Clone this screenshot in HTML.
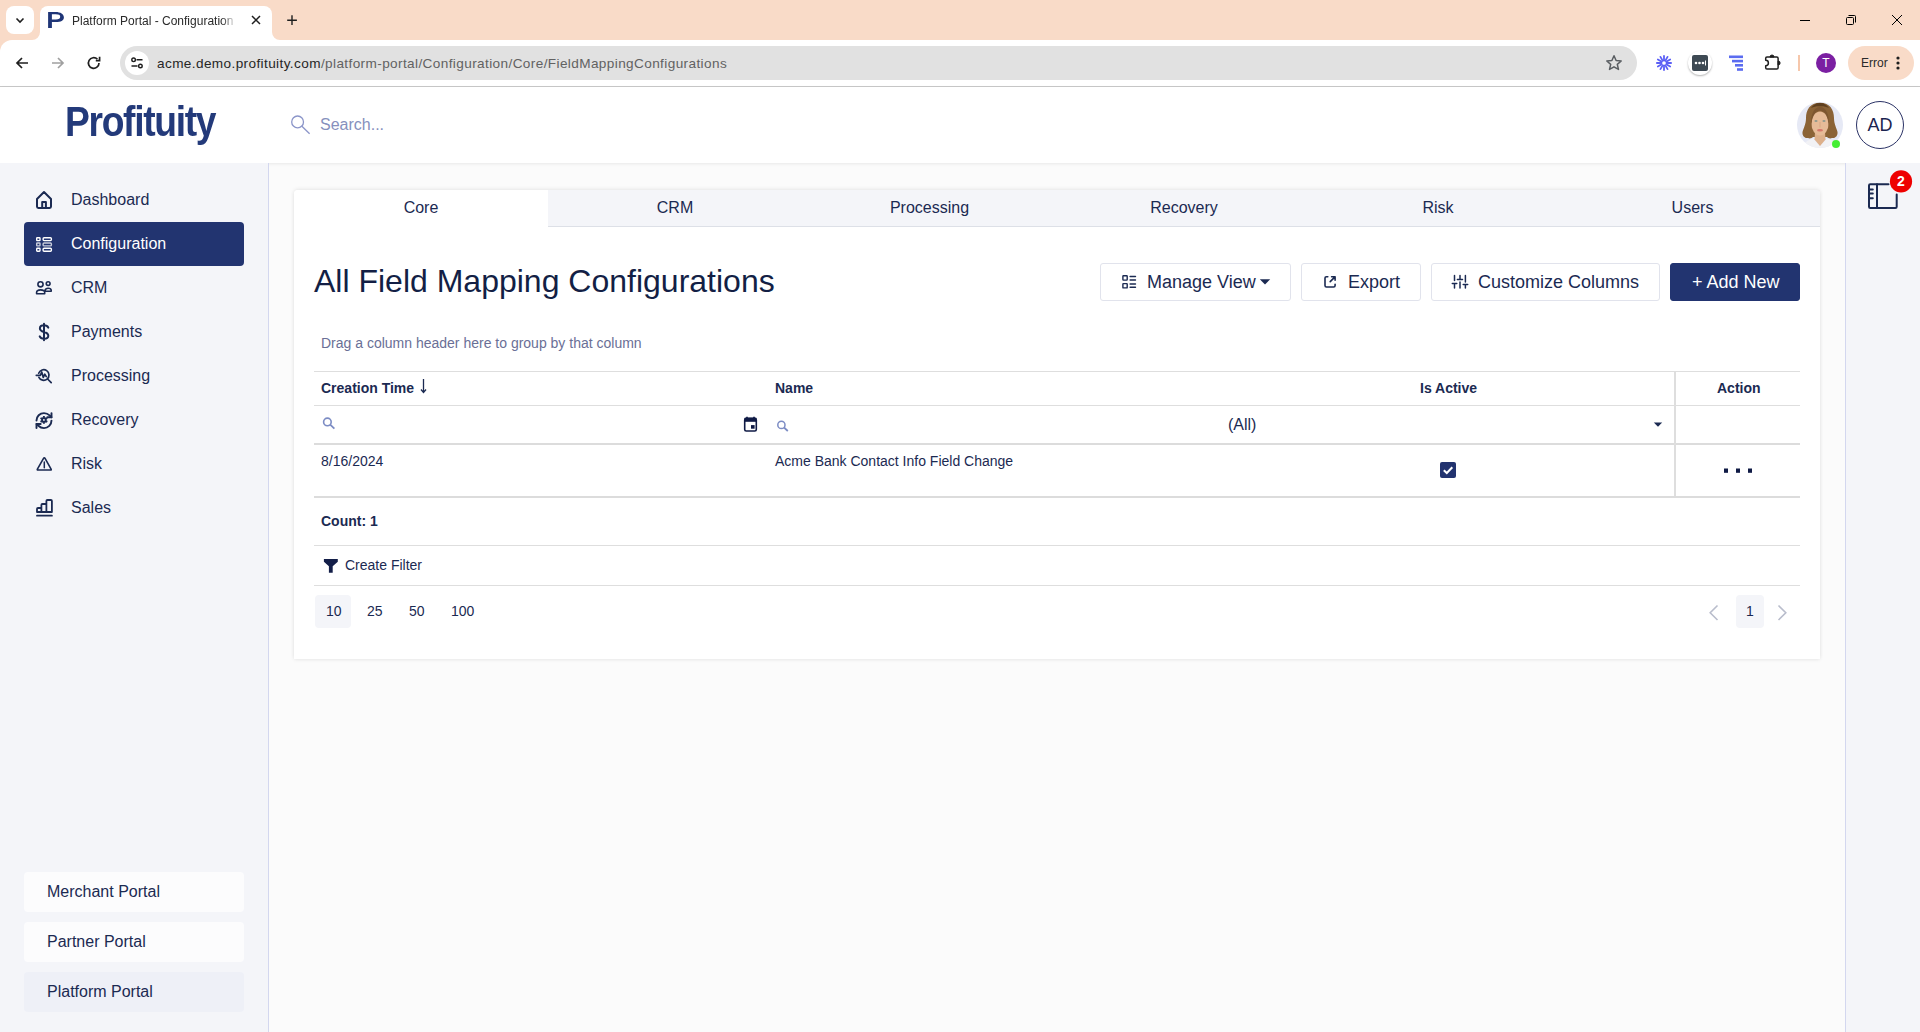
<!DOCTYPE html>
<html><head><meta charset="utf-8">
<style>
*{box-sizing:border-box;margin:0;padding:0}
html,body{width:1920px;height:1032px;overflow:hidden;background:#fbfbfb;font-family:"Liberation Sans",sans-serif}
.a{position:absolute}
svg{position:absolute;overflow:visible}
#tabstrip{left:0;top:0;width:1920px;height:40px;background:#f9dbc8}
#toolbar{left:0;top:40px;width:1920px;height:46px;background:#fff}
#tbline{left:0;top:86px;width:1920px;height:1px;background:#c9c9c9}
#omni{left:120px;top:46px;width:1517px;height:34px;border-radius:17px;background:#e1e1e1}
#hdr{left:0;top:87px;width:1920px;height:76px;background:#fff;box-shadow:0 1px 3px rgba(0,0,0,.08)}
#side{left:0;top:163px;width:269px;height:869px;background:#f4f5f9;border-right:1px solid #d3d7ef}
#rail{left:1845px;top:163px;width:75px;height:869px;background:#f4f5f9;border-left:1px solid #d3d7ef}
.nav{position:absolute;left:24px;width:220px;height:44px;border-radius:4px;color:#1b2a52;font-size:16px}
.nav span{position:absolute;left:47px;top:13px;line-height:18px}
.nav.act{background:#223470;color:#fff}
.portal{position:absolute;left:24px;width:220px;height:40px;border-radius:4px;background:#fcfcfd;color:#1b2a52;font-size:16px}
.portal span{position:absolute;left:23px;top:11px;line-height:18px}
#card{left:294px;top:190px;width:1526px;height:469px;background:#fff;border-radius:4px 4px 0 0;box-shadow:0 -1px 4px rgba(0,0,0,.07),0 1px 4px rgba(0,0,0,.06)}
.tab{position:absolute;top:0;height:37px;background:#f4f5f9;color:#1b2a52;font-size:16px;text-align:center;line-height:36px;border-bottom:1px solid #dde0e7}
.tab.act{background:#fff;border-bottom:none;border-radius:4px 4px 0 0}
.btn{position:absolute;top:73px;height:38px;border:1px solid #e1e3ec;border-radius:3px;background:#fff;color:#1b2a52;font-size:18px}
.btn span{position:absolute;top:8px;line-height:20px}
.ic{fill:none;stroke:#1b2a52;stroke-width:2;stroke-linecap:round;stroke-linejoin:round}
.hl{position:absolute;height:1px;background:#dedede}
.vl{position:absolute;width:2px;background:#dedede}
.th{position:absolute;top:380px;font-size:14px;font-weight:bold;color:#1b2a52;line-height:16px}
.td{position:absolute;font-size:14px;color:#1b2a52;line-height:16px}
.pg{position:absolute;top:603px;font-size:14px;color:#1b2a52;line-height:16px}
</style></head><body>
<!-- ============ browser chrome ============ -->
<div id="tabstrip" class="a"></div>
<div class="a" style="left:6px;top:6px;width:28px;height:28px;border-radius:8px;background:#fff"></div>
<svg style="left:12px;top:12px" width="16" height="16"><path d="M4.5 6.5 L8 10 L11.5 6.5" fill="none" stroke="#1f1f1f" stroke-width="1.6"/></svg>
<!-- active tab -->
<div class="a" style="left:40px;top:6px;width:232px;height:40px;background:#fff;border-radius:8px 8px 0 0"></div>
<svg style="left:32px;top:32px" width="8" height="8"><path d="M0 8 A8 8 0 0 0 8 0 V8 Z" fill="#fff"/></svg>
<svg style="left:272px;top:32px" width="8" height="8"><path d="M0 0 A8 8 0 0 0 8 8 H0 Z" fill="#fff"/></svg>
<svg style="left:44px;top:8px" width="24" height="24"><path fill-rule="evenodd" fill="#1f3577" d="M4.1 4 H11.6 C16.6 4 19.9 6.2 19.9 9.4 C19.9 12.5 16.8 14 12 14 H7.9 V19.9 H4.1 Z M7.9 6.3 V11.4 H11.8 C14.9 11.4 16.2 10.7 16.2 8.85 C16.2 7 14.8 6.3 11.8 6.3 Z"/></svg>
<div class="a" style="left:72px;top:13px;width:170px;height:16px;overflow:hidden;white-space:nowrap;font-size:12px;color:#2a2a2a;line-height:16px;-webkit-mask-image:linear-gradient(90deg,#000 88%,transparent 97%)">Platform Portal - Configuration</div>
<svg style="left:248px;top:12px" width="16" height="16"><path d="M4 4 L12 12 M12 4 L4 12" stroke="#1f1f1f" stroke-width="1.5"/></svg>
<svg style="left:284px;top:12px" width="16" height="16"><path d="M8 3.3 V13 M3.2 8.2 H12.9" stroke="#1f1f1f" stroke-width="1.4"/></svg>
<!-- window controls -->
<svg style="left:1797px;top:12px" width="16" height="16"><path d="M3 8.5 H13" stroke="#000" stroke-width="1"/></svg>
<svg style="left:1843px;top:12px" width="16" height="16"><rect x="3.5" y="5.5" width="7" height="7" rx="1" fill="none" stroke="#000" stroke-width="1"/><path d="M5.5 3.5 H11.5 Q12.5 3.5 12.5 4.5 V10.5" fill="none" stroke="#000" stroke-width="1"/></svg>
<svg style="left:1889px;top:12px" width="16" height="16"><path d="M3 3 L13 13 M13 3 L3 13" stroke="#000" stroke-width="1"/></svg>

<div id="toolbar" class="a"></div>
<div class="a" style="left:0;top:40px;width:12px;height:12px;background:#f9dbc8"></div>
<div class="a" style="left:0;top:40px;width:24px;height:24px;border-radius:12px 0 0 0;background:#fff"></div>
<!-- nav buttons -->
<svg style="left:14px;top:55px" width="16" height="16"><path d="M14 8 H3 M8 3 L3 8 L8 13" fill="none" stroke="#1f1f1f" stroke-width="1.7"/></svg>
<svg style="left:50px;top:55px" width="16" height="16"><path d="M2 8 H13 M8 3 L13 8 L8 13" fill="none" stroke="#a0a0a0" stroke-width="1.7"/></svg>
<svg style="left:86px;top:55px" width="16" height="16"><path d="M13 8 A5.3 5.3 0 1 1 11.4 4.2" fill="none" stroke="#1f1f1f" stroke-width="1.7"/><path d="M13.6 1.8 V5.6 H9.8" fill="none" stroke="#1f1f1f" stroke-width="1.7"/></svg>
<div id="omni" class="a"></div>
<div class="a" style="left:125px;top:51px;width:24px;height:24px;border-radius:12px;background:#fff"></div>
<svg style="left:129px;top:55px" width="16" height="16"><circle cx="4.6" cy="4.8" r="1.8" fill="none" stroke="#1f1f1f" stroke-width="1.4"/><path d="M7.5 4.8 H13.5 M2.5 11 H8.5" stroke="#1f1f1f" stroke-width="1.4"/><circle cx="11.4" cy="11" r="1.8" fill="none" stroke="#1f1f1f" stroke-width="1.4"/></svg>
<div class="a" style="left:157px;top:55px;font-size:13.6px;letter-spacing:0.385px;color:#626262;line-height:18px;white-space:nowrap"><span style="color:#262626">acme.demo.profituity.com</span>/platform-portal/Configuration/Core/FieldMappingConfigurations</div>
<svg style="left:1605px;top:54px" width="18" height="18"><path d="M9 1.8 L11.1 6.5 L16.2 7 L12.3 10.4 L13.5 15.4 L9 12.8 L4.5 15.4 L5.7 10.4 L1.8 7 L6.9 6.5 Z" fill="none" stroke="#5a5e62" stroke-width="1.5" stroke-linejoin="round"/></svg>
<!-- extensions -->
<svg style="left:1656px;top:55px" width="16" height="16"><path d="M11.60 8.00 L15.10 8.00 M11.12 9.80 L14.15 11.55 M9.80 11.12 L11.55 14.15 M8.00 11.60 L8.00 15.10 M6.20 11.12 L4.45 14.15 M4.88 9.80 L1.85 11.55 M4.40 8.00 L0.90 8.00 M4.88 6.20 L1.85 4.45 M6.20 4.88 L4.45 1.85 M8.00 4.40 L8.00 0.90 M9.80 4.88 L11.55 1.85 M11.12 6.20 L14.15 4.45 " stroke="#5b5ff5" stroke-width="1.8" stroke-linecap="round"/><circle cx="8" cy="8" r="2.5" fill="none" stroke="#5b5ff5" stroke-width="1.3"/></svg>
<div class="a" style="left:1688px;top:51px;width:24px;height:24px;border-radius:12px;background:#fff;box-shadow:0 1px 2px rgba(0,0,0,.3)"></div>
<div class="a" style="left:1692px;top:55px;width:16px;height:16px;border-radius:2px;background:#3d4953"></div>
<svg style="left:1692px;top:55px" width="16" height="16"><g fill="#fff"><circle cx="4" cy="8" r="1.3"/><circle cx="7.5" cy="8" r="1.3"/><circle cx="11" cy="8" r="1.3"/><rect x="13" y="5.5" width="1" height="5"/></g></svg>
<svg style="left:1728px;top:55px" width="16" height="16"><g fill="#5b6cf0"><rect x="1" y="0.5" width="14" height="2.6"/><rect x="4" y="4.8" width="11" height="2.6"/><rect x="7" y="9" width="8" height="2.6"/><rect x="9" y="13.2" width="6" height="2.6"/></g></svg>
<svg style="left:1760px;top:51px" width="24" height="24"><path d="M5.7 9.3 V7.3 Q5.7 6 7 6 H16.8 Q18.1 6 18.1 7.3 V16.8 Q18.1 18.1 16.8 18.1 H7 Q5.7 18.1 5.7 16.8 V14.7 A2.7 2.7 0 0 0 5.7 9.3 Z" fill="none" stroke="#1f1f1f" stroke-width="1.5" stroke-linejoin="round"/><path d="M10 6 A2 2 0 0 1 14 6 Z M18.1 10 A2 2 0 0 1 18.1 14 Z" fill="#1f1f1f" stroke="#1f1f1f" stroke-width="1"/></svg>
<div class="a" style="left:1798px;top:55px;width:2px;height:16px;background:#f6c7ab"></div>
<div class="a" style="left:1816px;top:53px;width:20px;height:20px;border-radius:10px;background:#7b1fa2;color:#fff;font-size:12px;text-align:center;line-height:20px">T</div>
<div class="a" style="left:1848px;top:46px;width:66px;height:34px;border-radius:17px;background:#f9dbc8"></div>
<div class="a" style="left:1861px;top:55px;font-size:12px;color:#2a2a2a;line-height:16px">Error</div>
<svg style="left:1890px;top:55px" width="16" height="16"><g fill="#1f1f1f"><circle cx="8" cy="3" r="1.6"/><circle cx="8" cy="8" r="1.6"/><circle cx="8" cy="13" r="1.6"/></g></svg>
<div id="tbline" class="a"></div>

<!-- ============ app header ============ -->
<div id="hdr" class="a"></div>
<div class="a" style="left:65px;top:97px;font-size:43px;font-weight:bold;color:#233a7a;letter-spacing:-1.5px;line-height:48px;transform:scaleX(0.865);transform-origin:0 0">Profituity</div>
<svg style="left:286px;top:110px" width="30" height="30"><circle cx="11.6" cy="11.9" r="5.9" fill="none" stroke="#8b95c9" stroke-width="1.3"/><path d="M15.9 16.2 L23.6 23.8" stroke="#8b95c9" stroke-width="1.3"/></svg>
<div class="a" style="left:320px;top:115px;font-size:16px;color:#8690bd;line-height:20px">Search...</div>
<!-- avatar -->
<div class="a" style="left:1797px;top:102px;width:46px;height:46px;border-radius:23px;background:#e6e9f5;overflow:hidden">
 <svg style="left:0;top:0" width="46" height="46">
  <path d="M23 0.8 C13 0.8 9 8 9 16 C9 22 6.5 26 5.5 30 C5 34 8 36.5 11 36 C13 37 15 36 16 35 L30 35 C31 36 33 37 35 36 C38 36.5 41 34 40.5 30 C39.5 26 37 22 37 16 C37 8 33 0.8 23 0.8 Z" fill="#8b6336"/>
  <path d="M6 46 C7 40 11 37.5 16.5 37 L23 44 L29.5 37 C35 37.5 39 40 40 46 Z" fill="#f2f2f5"/>
  <path d="M18 30 H28 L28.5 37.5 L23 44 L17.5 37.5 Z" fill="#ddb08b"/>
  <ellipse cx="23" cy="21.5" rx="8.6" ry="12" fill="#e6bb97"/>
  <path d="M14.3 24 C13 13 17 5 23 5 C29 5 33 13 31.7 24 C31 15 28.5 9 23.3 8.5 C23 8.5 23 8.5 22.7 8.5 C17.5 9 15 15 14.3 24 Z" fill="#7d5630"/>
  <path d="M23 1 C19 1 16 3 14 6 C17 4.5 20 4 23 4.2 C26 4 29 4.5 32 6 C30 3 27 1 23 1 Z" fill="#5e3f1f"/>
  <ellipse cx="19" cy="19" rx="1.6" ry=".8" fill="#6f8c88"/><ellipse cx="27" cy="19" rx="1.6" ry=".8" fill="#6f8c88"/>
  <path d="M23 20 V25.5" stroke="#d4a27e" stroke-width=".8"/>
  <ellipse cx="23" cy="28.3" rx="3" ry="1.2" fill="#d6776a"/>
 </svg>
</div>
<div class="a" style="left:1832px;top:140px;width:8px;height:8px;border-radius:4px;background:#44ee33"></div>
<div class="a" style="left:1856px;top:101px;width:48px;height:48px;border-radius:24px;border:1.5px solid #2b3366;background:#fff;color:#1b2450;font-size:18px;text-align:center;line-height:47px">AD</div>

<!-- ============ sidebar ============ -->
<div id="side" class="a"></div>
<div class="nav" style="top:178px"><span>Dashboard</span></div>
<svg style="left:32px;top:187px" width="24" height="24" class="ic"><path d="M5 19.6 V12 L12 5 L19 12 V19.6 Q19 21 17.6 21 H6.4 Q5 21 5 19.6 Z M10.2 21 V15 H13.9 V21"/></svg>
<div class="nav act" style="top:222px"><span>Configuration</span></div>
<svg style="left:32px;top:232px" width="24" height="24"><g fill="none" stroke="#fff" stroke-width="1.4"><rect x="4.7" y="5.7" width="3.3" height="2.9" rx=".6"/><rect x="11.1" y="5.7" width="8.3" height="2.9" rx="1"/><rect x="4.7" y="11" width="3.3" height="2.9" rx=".6" stroke-opacity=".75"/><rect x="11.1" y="11" width="8.3" height="2.9" rx="1" stroke-opacity=".75"/><rect x="4.7" y="16.3" width="3.3" height="2.9" rx=".6"/><rect x="11.1" y="16.3" width="8.3" height="2.9" rx="1"/></g></svg>
<div class="nav" style="top:266px"><span>CRM</span></div>
<svg style="left:32px;top:276px" width="24" height="24" class="ic" style="stroke-width:1.6"><g stroke-width="1.6"><circle cx="8.5" cy="8.3" r="2.6"/><circle cx="16.15" cy="7.6" r="1.9"/><path d="M12.9 14.4 C13.4 12.9 14.6 12.2 16.05 12.2 C17.8 12.2 19.2 13.1 19.2 14.3 V15.2 H13.2"/><path d="M4.6 17.8 V16.6 C4.6 15 6.5 13.9 8.65 13.9 C10.8 13.9 12.7 15 12.7 16.6 V17.8 Z"/></g></svg>
<div class="nav" style="top:310px"><span>Payments</span></div>
<svg style="left:32px;top:320px" width="24" height="24" class="ic"><path d="M12 3.8 V20.2 M16.3 7.6 C15.6 6.1 14 5.3 12 5.3 C9.5 5.3 7.9 6.6 7.9 8.5 C7.9 10.6 10 11.4 12 12 C14.2 12.6 16.3 13.5 16.3 15.7 C16.3 17.6 14.5 18.8 12 18.8 C10 18.8 8.3 17.9 7.7 16.4"/></svg>
<div class="nav" style="top:354px"><span>Processing</span></div>
<svg style="left:32px;top:364px" width="24" height="24" class="ic"><g stroke-width="1.7"><path d="M6.7 9.2 A5.3 5.3 0 1 1 6.9 13.3"/><path d="M15.6 15 L19.2 18.6"/><path d="M4.3 11.3 H8.4 L9.7 8 L11.3 13.5 L12.8 10.2 L14.3 12.6"/></g></svg>
<div class="nav" style="top:398px"><span>Recovery</span></div>
<svg style="left:32px;top:408px" width="24" height="24"><g transform="translate(2,2.6) scale(0.833)" fill="none" stroke="#1b2a52" stroke-width="2.3" stroke-linecap="round" stroke-linejoin="round"><path d="M3 12a9 9 0 0 1 9-9 9.75 9.75 0 0 1 6.74 2.74L21 8"/><path d="M21 3v5h-5"/><path d="M21 12a9 9 0 0 1-9 9 9.75 9.75 0 0 1-6.74-2.74L3 16"/><path d="M8 16H3v5"/></g><g stroke="#1b2a52" fill="none"><circle cx="11.9" cy="11.9" r="1.9" stroke-width="1.9"/><path d="M11.90 9.50 L11.90 8.00 M13.98 10.70 L15.28 9.95 M9.82 10.70 L8.52 9.95 M9.82 13.10 L8.52 13.85 M11.90 14.30 L11.90 15.80 M13.98 13.10 L15.28 13.85 " stroke-width="1.9"/></g></svg>
<div class="nav" style="top:442px"><span>Risk</span></div>
<svg style="left:32px;top:452px" width="24" height="24" class="ic"><g stroke-width="1.6"><path d="M11.4 6.6 Q12.3 5 13.2 6.6 L19.1 17.1 Q19.6 18 18.6 18 H5.9 Q4.9 18 5.4 17.1 Z"/><path d="M12.3 10 V15.8" stroke-width="1.5"/></g></svg>
<div class="nav" style="top:486px"><span>Sales</span></div>
<svg style="left:32px;top:496px" width="24" height="24" class="ic"><g stroke-width="1.8"><path d="M5 16 V13 Q5 12 6 12 H9.4 V16 Z M9.4 16 V9 Q9.4 8 10.4 8 H14.4 V16 Z M14.4 16 V5 Q14.4 4 15.4 4 H18.9 Q19.9 4 19.9 5 V16 Z"/><path d="M5 19.7 H19.9"/></g></svg>

<div class="portal" style="top:872px"><span>Merchant Portal</span></div>
<div class="portal" style="top:922px"><span>Partner Portal</span></div>
<div class="portal" style="top:972px;background:#eef0f7"><span>Platform Portal</span></div>

<!-- ============ right rail ============ -->
<div id="rail" class="a"></div>
<svg style="left:1860px;top:168px" width="56" height="46"><g fill="none" stroke="#1b2a52" stroke-width="2" stroke-linecap="round" stroke-linejoin="round"><path d="M28.5 16.2 H10.3 Q9 16.2 9 17.5 V38.7 Q9 40 10.3 40 H35.4 Q36.7 40 36.7 38.7 V26.5"/><path d="M17 16.2 V40"/><path d="M9.5 21.4 H12.8 M9.5 25.6 H12.8 M9.5 30.3 H12.8"/></g><circle cx="41" cy="13.4" r="11.1" fill="#ee0000"/><text x="41" y="18.3" text-anchor="middle" font-family="Liberation Sans" font-weight="bold" font-size="14" fill="#fff">2</text></svg>

<!-- ============ card ============ -->
<div id="card" class="a">
  <div class="tab act" style="left:0;width:254px">Core</div>
  <div class="tab" style="left:254px;width:254px">CRM</div>
  <div class="tab" style="left:508px;width:255px">Processing</div>
  <div class="tab" style="left:763px;width:254px">Recovery</div>
  <div class="tab" style="left:1017px;width:254px">Risk</div>
  <div class="tab" style="left:1271px;width:255px;border-radius:0 4px 0 0">Users</div>
  <div class="a" style="left:20px;top:71px;font-size:32px;color:#131f45;line-height:40px">All Field Mapping Configurations</div>
  <div class="btn" style="left:806px;width:191px"><span style="left:46px">Manage View</span></div>
  <div class="btn" style="left:1007px;width:120px"><span style="left:46px">Export</span></div>
  <div class="btn" style="left:1137px;width:229px"><span style="left:46px">Customize Columns</span></div>
  <div class="btn" style="left:1376px;width:130px;background:#223470;border-color:#223470;color:#fff"><span style="left:21px">+ Add New</span></div>
</div>
<!-- button icons (page coords) -->
<svg style="left:1117px;top:270px" width="24" height="24" class="ic"><g stroke-width="1.4"><rect x="5.9" y="5.8" width="4.3" height="4.3" rx=".5"/><rect x="5.9" y="13.6" width="4.3" height="4.3" rx=".5"/><path d="M13.1 6.5 H18.5 M13.1 10 H18.5 M13.1 14 H18.5 M13.1 17.3 H18.5"/></g></svg>
<svg style="left:1258px;top:276px" width="14" height="12"><path d="M1.8 3.2 H12.2 L7 8.6 Z" fill="#1b2a52"/></svg>
<svg style="left:1318px;top:270px" width="24" height="24" class="ic"><g stroke-width="1.6"><path d="M9.8 6.7 H8.4 Q7 6.7 7 8.1 V15.6 Q7 17 8.4 17 H15.7 Q17.1 17 17.1 15.6 V14.2"/><path d="M12.2 11.6 L16.7 7.1 M13.6 6.7 H17.1 V10.3"/></g></svg>
<svg style="left:1448px;top:270px" width="24" height="24" class="ic"><g stroke-width="1.5"><path d="M6.5 5.6 V10.4 M6.5 13.4 V18.1 M4.3 13.4 H8.8 M12 5.6 V9.4 M12 11.9 V18.1 M9.4 9.4 H14.5 M17.4 5.6 V12 M17.4 14.5 V18.1 M15.2 14.5 H19.7"/></g></svg>

<!-- ============ table ============ -->
<div class="a" style="left:321px;top:335px;font-size:14px;color:#6a6f96;line-height:16px">Drag a column header here to group by that column</div>
<div class="hl" style="left:314px;top:371px;width:1486px"></div>
<div class="th" style="left:321px">Creation Time</div>
<svg style="left:418px;top:377px" width="12" height="18"><path d="M5.5 2 V15 M3 12.5 L5.5 15.5 L8 12.5" fill="none" stroke="#1b2a52" stroke-width="1.3"/></svg>
<div class="th" style="left:775px">Name</div>
<div class="th" style="left:1420px">Is Active</div>
<div class="th" style="left:1717px">Action</div>
<div class="hl" style="left:314px;top:405px;width:1486px"></div>
<svg style="left:318px;top:412px" width="24" height="24"><circle cx="9.4" cy="9.9" r="3.8" fill="none" stroke="#7c8cc4" stroke-width="1.6"/><path d="M12.2 12.7 L16.4 16.6" stroke="#7c8cc4" stroke-width="1.8"/></svg>
<svg style="left:738px;top:412px" width="24" height="24"><g fill="none" stroke="#0f1a45" stroke-width="1.6"><rect x="6.7" y="6.4" width="11.6" height="12.6" rx="1.5"/><path d="M9 4.8 V6.4 M16 4.8 V6.4"/></g><rect x="6.7" y="5.8" width="11.6" height="4" fill="#0f1a45"/><rect x="13" y="13.1" width="3.6" height="3.6" fill="#0f1a45"/></svg>
<svg style="left:772px;top:411px" width="24" height="24"><circle cx="9.4" cy="13.9" r="3.6" fill="none" stroke="#7c8cc4" stroke-width="1.5"/><path d="M12 16.5 L15.8 20" stroke="#7c8cc4" stroke-width="1.7"/></svg>
<div class="td" style="left:1228px;top:416px;font-size:16px;line-height:18px">(All)</div>
<svg style="left:1650px;top:418px" width="16" height="12"><path d="M3.8 4.5 H12.2 L8 8.8 Z" fill="#1b2a52"/></svg>
<div class="a" style="left:314px;top:443px;width:1486px;height:2px;background:#dcdcdc"></div>
<div class="vl" style="left:1674px;top:371px;height:126px"></div>
<div class="td" style="left:321px;top:453px">8/16/2024</div>
<div class="td" style="left:775px;top:453px">Acme Bank Contact Info Field Change</div>
<div class="a" style="left:1440px;top:462px;width:16px;height:16px;border-radius:2px;background:#22336f"></div>
<svg style="left:1440px;top:462px" width="16" height="16"><path d="M3.8 8.2 L6.8 11 L12.3 5.3" fill="none" stroke="#fff" stroke-width="2"/></svg>
<svg style="left:1720px;top:464px" width="36" height="12"><g fill="#0f1a45"><rect x="4" y="4.5" width="4" height="4.3"/><rect x="16" y="4.5" width="4" height="4.3"/><rect x="28" y="4.5" width="4" height="4.3"/></g></svg>
<div class="a" style="left:314px;top:496px;width:1486px;height:2px;background:#dcdcdc"></div>
<div class="td" style="left:321px;top:513px;font-weight:bold">Count: 1</div>
<div class="hl" style="left:314px;top:545px;width:1486px"></div>
<svg style="left:320px;top:555px" width="22" height="22"><path d="M3.9 3.9 H17.8 V6.8 L12.7 11.3 V17.8 H8.9 V11.3 L3.9 6.8 Z" fill="#131e48"/></svg>
<div class="td" style="left:345px;top:557px">Create Filter</div>
<div class="hl" style="left:314px;top:585px;width:1486px"></div>
<div class="a" style="left:315px;top:595px;width:36px;height:33px;border-radius:4px;background:#f4f5f9"></div>
<div class="pg" style="left:326px">10</div>
<div class="pg" style="left:367px">25</div>
<div class="pg" style="left:409px">50</div>
<div class="pg" style="left:451px">100</div>
<div class="a" style="left:1736px;top:595px;width:28px;height:33px;border-radius:4px;background:#f4f5f9"></div>
<div class="pg" style="left:1746px">1</div>
<svg style="left:1704px;top:602px" width="20" height="20"><path d="M13.5 3.5 L6.2 10.8 L13.5 18" fill="none" stroke="#b9bdcc" stroke-width="1.6"/></svg>
<svg style="left:1772px;top:602px" width="20" height="20"><path d="M6.5 3.5 L13.8 10.8 L6.5 18" fill="none" stroke="#b9bdcc" stroke-width="1.6"/></svg>
</body></html>
